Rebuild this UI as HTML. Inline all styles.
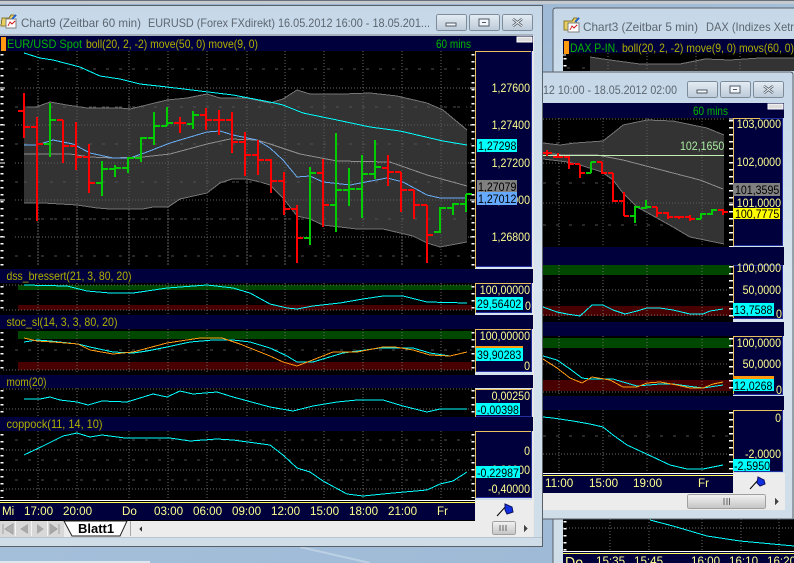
<!DOCTYPE html>
<html>
<head>
<meta charset="utf-8">
<title>Charts</title>
<style>
html,body{margin:0;padding:0;background:#a0bcd8}
svg{display:block}
text{font-family:"Liberation Sans",Arial,sans-serif;font-size:12px;white-space:pre}
.y,.k{transform-box:fill-box;transform-origin:0 0;transform:scaleX(.885)}
.y{fill:#ffff90}
.e{text-anchor:end;transform-origin:100% 0}
.k{fill:#000}
.h{fill:#b0b000}
.g{fill:#00b800}
.t{fill:#5c6670}
.x{fill:#ffff90;transform-box:fill-box;transform-origin:0 0;transform:scaleX(.97)}
.d{stroke:#6c6c6c;stroke-width:1;stroke-dasharray:1 2;fill:none}
.dd{stroke:#505050;stroke-width:1;stroke-dasharray:3 10;fill:none}
.l{fill:none;stroke-width:1;shape-rendering:crispEdges}
.c{stroke:#00ffff}
.o{stroke:#ff9a10}
.b{stroke:#68adf5}
.gr{stroke:#8e8e8e}
.bf{fill:#333;stroke:none}
.be{fill:none;stroke:#747474;stroke-width:1;shape-rendering:crispEdges}
.r{fill:none;stroke:#ff0000;stroke-width:2;shape-rendering:crispEdges}
.u{fill:none;stroke:#00cc00;stroke-width:2;shape-rendering:crispEdges}
.tk{stroke:#fff;stroke-width:3;stroke-dasharray:1.5 5.5;fill:none}
.btn{fill:url(#bg);stroke:#7e8c9a;stroke-width:1}
.ax{fill:#00003c;stroke:#2030a0;stroke-width:1}
.ay{stroke:#e8c060;stroke-width:1;fill:none}
</style>
</head>
<body>
<svg xmlns="http://www.w3.org/2000/svg" width="794" height="563" viewBox="0 0 794 563" shape-rendering="crispEdges">
<defs>
<linearGradient id="bg" x1="0" y1="0" x2="0" y2="1"><stop offset="0" stop-color="#e4ecf4"/><stop offset="1" stop-color="#bccad8"/></linearGradient>
<linearGradient id="tb" x1="0" y1="0" x2="0" y2="1"><stop offset="0" stop-color="#c6d8e8"/><stop offset=".5" stop-color="#d8e5f0"/><stop offset="1" stop-color="#cfdde9"/></linearGradient>
<linearGradient id="sc" x1="0" y1="0" x2="0" y2="1"><stop offset="0" stop-color="#f2f2f2"/><stop offset="1" stop-color="#c4c4c4"/></linearGradient>
<linearGradient id="ds" x1="0" y1="0" x2="1" y2="1"><stop offset="0" stop-color="#8eacca"/><stop offset=".5" stop-color="#a4bfda"/><stop offset="1" stop-color="#9cb8d4"/></linearGradient>
</defs>

<!-- desktop -->
<rect width="794" height="563" fill="url(#ds)"/>
<rect x="0" y="0" width="794" height="4" fill="#c4cad0"/>
<rect x="0" y="0" width="794" height="1" fill="#6a7078"/>
<rect x="0" y="561" width="150" height="2" fill="#dfe6ee"/>
<path d="M300 547L370 563" stroke="#bcd0e4" stroke-width="2" fill="none" shape-rendering="auto"/>

<!-- CHART3 WINDOW (back) -->
<rect x="553" y="8" width="241" height="555" fill="url(#tb)"/>
<path d="M553 563V11Q553 8 556 8H794" fill="none" stroke="#5a6068"/>
<rect x="563" y="39" width="231" height="14" fill="#00003c"/>
<rect x="563" y="53" width="231" height="18" fill="#000"/>
<rect x="564" y="41" width="5" height="13" fill="#ff9a10"/>
<path d="M590 71V57L610 60L640 64L680 64L705 59L730 60L760 58L794 58V71Z" class="bf"/>
<polyline class="be" points="590,57 610,60 640,64 680,64 705,59 730,60 760,58 794,58"/>
<line x1="563" y1="55" x2="566" y2="55" stroke="#fff" stroke-width="1"/>
<line x1="565" y1="58" x2="565" y2="71" class="tk"/>
<path d="M567 68h3M582 68h3" class="dd"/>
<path d="M608 53V71M647 53V71M696 53V71M740 53V71" class="d"/>
<text x="570" y="52" class="g" textLength="48" lengthAdjust="spacingAndGlyphs">DAX P-IN.</text>
<text x="622" y="52" class="h" textLength="172" lengthAdjust="spacingAndGlyphs">boll(20, 2, -2) move(9, 0) movs(60, 0)</text>
<text x="583" y="31" class="t" textLength="115" lengthAdjust="spacingAndGlyphs">Chart3 (Zeitbar 5 min)</text>
<text x="706" y="31" class="t" textLength="88" lengthAdjust="spacingAndGlyphs">DAX (Indizes Xetr</text>
<g>
<path d="M564 21h8l2-3h3l-2 12h-11z" fill="#e8d060" stroke="#8a7a30"/>
<rect x="568" y="23" width="11" height="9" fill="#fff" stroke="#808080"/>
<path d="M570 30l2-4l2 2l3-3" stroke="#d02020" fill="none"/>
<path d="M575 22l4-4" stroke="#2060d0" stroke-width="2"/>
</g>

<!-- chart3 lower part -->
<rect x="563" y="519" width="231" height="44" fill="#000"/>
<path d="M563 528H794" class="d"/>
<path d="M610 519V551M649 519V551M702 519V551M741 519V551M779 519V551" class="d"/>
<line x1="565" y1="521" x2="565" y2="551" class="tk"/>
<polyline class="l c" points="650,520 673,526 707,536 740,541 794,546"/>
<rect x="563" y="551" width="231" height="12" fill="#00003c"/>
<rect x="563" y="551" width="231" height="1" fill="#fff"/>
<rect x="563" y="553" width="231" height="1" fill="#ffff60"/>
<text x="565" y="568" class="y" style="font-size:16px">Do</text>
<text x="596" y="565" class="x">15:35</text>
<text x="634" y="565" class="x">15:45</text>
<text x="691" y="565" class="x">16:00</text>
<text x="729" y="565" class="x">16:10</text>
<text x="767" y="565" class="x">16:20</text>

<!-- THIRD WINDOW (middle) -->
<path d="M530 72H790Q793 72 793 75V519H530Z" fill="url(#tb)" stroke="#5a6068"/>
<rect x="543" y="103" width="241" height="15" fill="#00003c"/>
<rect x="543" y="118" width="190" height="129" fill="#000"/>
<rect x="543" y="247" width="241" height="18" fill="#00003c"/>
<rect x="543" y="265" width="190" height="57" fill="#000"/>
<rect x="543" y="322" width="241" height="14" fill="#00003c"/>
<rect x="543" y="336" width="190" height="60" fill="#000"/>
<rect x="543" y="396" width="241" height="14" fill="#00003c"/>
<rect x="543" y="410" width="190" height="63" fill="#000"/>
<rect x="733" y="473" width="52" height="21" fill="#ececec"/>
<rect x="543" y="473" width="190" height="20" fill="#00003c"/>
<rect x="543" y="473" width="190" height="1" fill="#fff"/>
<rect x="543" y="475" width="190" height="1" fill="#ffff60"/>
<rect x="543" y="493" width="242" height="17" fill="#ececec"/>
<rect x="768" y="104" width="15" height="5" fill="#dcdcdc" stroke="#fff"/>

<text x="543" y="94" class="t" textLength="134" lengthAdjust="spacingAndGlyphs">12 10:00 - 18.05.2012 02:00</text>
<rect x="687.500" y="81.500" width="30" height="16" rx="2" class="btn"/>
<rect x="720.500" y="81.500" width="30" height="16" rx="2" class="btn"/>
<rect x="753.500" y="81.500" width="30" height="16" rx="2" class="btn"/>
<rect x="697" y="90" width="10" height="3" fill="#f4f8fc" stroke="#505a64"/>
<rect x="730" y="86" width="10" height="7" fill="#f4f8fc" stroke="#505a64"/>
<rect x="733" y="89" width="4" height="1" fill="#505a64"/>
<path d="M764 86l9 7M773 86l-9 7" stroke="#505a64" stroke-width="2.500" fill="none" shape-rendering="auto"/>
<path d="M764 86l9 7M773 86l-9 7" stroke="#f4f8fc" stroke-width="1" fill="none" shape-rendering="auto"/>
<text x="693" y="115" class="g" textLength="35" lengthAdjust="spacingAndGlyphs">60 mins</text>

<!-- window3 main panel -->
<path d="M543 119H724M543 163H724M543 203H724" class="d"/>
<path d="M559 118V247M603 118V247M647 118V247M702 118V247" class="d"/>
<path d="M543 143H724M543 183H724M543 225H724" class="dd"/>
<path d="M543 143L560 145L575 143L603 141L617 130L623 125L647 120L673 121L707 128L724 135V244L690 237L673 227L657 218L637 207L623 193L613 180L602 172L580 165L568 162L543 159Z" class="bf"/>
<polyline class="be" points="543,143 560,145 575,143 603,141 617,130 623,125 647,120 673,121 707,128 724,135"/>
<polyline class="be" points="724,244 690,237 673,227 657,218 637,207 623,193 613,180 602,172 580,165 568,162 543,159"/>
<path d="M647 118V247M702 118V247M543 203H724M603 118V247" class="d" style="stroke:#5c5c5c"/>
<polyline class="l gr" points="543,153 563,155 597,155 623,160 673,173 700,180 723,189"/>
<line x1="543" y1="155.500" x2="724" y2="155.500" stroke="#c4f0b4" stroke-width="1"/>
<text x="680" y="150" class="y" style="fill:#a8eca0">102,1650</text>
<path class="r" d="M547 150V156M543 153H552M558 153V158M553 157H563M569 156V169M564 157H569M569 164H574M580 165V178M575 164H580M580 173H585M602 162V174M597 162H602M602 173H607M613 173V202M608 173H613M613 201H618M624 192V216M619 201H624M624 216H629M657 207V217M652 207H657M657 213H662M668 212V219M663 213H668M668 217H673M679 216V219M674 217H684M690 215V221M685 217H690M690 219H695M723 209V215M718 210H723M723 212H728"/>
<path class="u" d="M591 162V173M586 173H591M591 162H596M635 206V223M630 216H635M635 207H640M646 200V209M641 208H646M646 207H651M701 213V219M696 219H701M701 214H706M712 209V215M707 214H712M712 210H717"/>
<line x1="731" y1="120" x2="731" y2="247" class="tk" style="stroke-width:4"/>
<line x1="729" y1="119" x2="733" y2="119" stroke="#fff"/><line x1="729" y1="163" x2="733" y2="163" stroke="#fff"/><line x1="729" y1="203" x2="733" y2="203" stroke="#fff"/>

<rect x="733.500" y="118.500" width="49" height="127" class="ax"/>
<path d="M733.500 246V118.500H760" class="ay"/>
<text x="781" y="128" class="y e">103,0000</text>
<text x="781" y="166" class="y e">102,0000</text>
<text x="781" y="207" class="y e">101,0000</text>
<rect x="733" y="183" width="47" height="13" fill="#808080"/>
<text x="735" y="194" class="k">101,3595</text>
<rect x="733" y="208" width="47" height="11" fill="#ffff00"/>
<text x="735" y="218" class="k">100,7775</text>

<!-- window3 panel A -->
<rect x="543" y="265" width="188" height="10" fill="#004800"/>
<rect x="543" y="306" width="188" height="10" fill="#480000"/>
<path d="M543 290H728M543 315H728" class="d"/>
<path d="M559 265V322M603 265V322M647 265V322M702 265V322" class="d"/>
<polyline class="l c" points="543,307 557,312 567,314 580,316 592,305 603,305 613,310 625,314 637,311 647,308 660,308 673,310 690,314 703,314 710,311 723,309"/>
<line x1="731" y1="266" x2="731" y2="320" class="tk" style="stroke-width:4"/>
<rect x="733.500" y="265.500" width="49" height="53" class="ax"/>
<path d="M733.500 318V265.500" class="ay"/>
<text x="781" y="272" class="y e">100,0000</text>
<text x="781" y="294" class="y e">50,0000</text>
<rect x="733" y="303" width="41" height="13" fill="#00ffff"/>
<text x="734" y="314" class="k">13,7588</text>
<text x="776" y="318" class="y">0</text>

<!-- window3 panel B -->
<rect x="543" y="338" width="188" height="10" fill="#004800"/>
<rect x="543" y="380" width="188" height="11" fill="#480000"/>
<path d="M543 364H728M543 392H728" class="d"/>
<path d="M559 336V396M603 336V396M647 336V396M702 336V396" class="d"/>
<polyline class="l c" points="543,356 557,360 570,369 582,378 590,379 613,379 623,382 637,386 660,384 673,384 687,386 703,388 723,385"/>
<polyline class="l o" points="543,359 557,368 570,378 582,383 592,377 610,380 623,387 637,387 647,383 660,382 677,385 690,388 703,388 713,384 723,382"/>
<line x1="731" y1="338" x2="731" y2="394" class="tk" style="stroke-width:4"/>
<rect x="733.500" y="336.500" width="49" height="58" class="ax"/>
<path d="M733.500 394V336.500H782" class="ay"/>
<text x="781" y="347" class="y e">100,0000</text>
<text x="781" y="368" class="y e">50,0000</text>
<rect x="733" y="376" width="41" height="3" fill="#ff9a10"/>
<rect x="733" y="379" width="41" height="12" fill="#00ffff"/>
<text x="734" y="390" class="k">12,0268</text>
<text x="776" y="394" class="y">0</text>

<!-- window3 panel C -->
<path d="M543 454H728" class="d"/>
<path d="M543 436H728" class="dd"/>
<path d="M559 410V473M603 410V473M647 410V473M702 410V473" class="d"/>
<polyline class="l c" points="543,417 553,418 573,421 590,424 603,427 613,435 627,445 640,451 653,457 670,465 687,469 703,469 723,465"/>
<line x1="731" y1="412" x2="731" y2="473" class="tk" style="stroke-width:4"/>
<rect x="733.500" y="410.500" width="49" height="61" class="ax"/>
<path d="M733.500 472V410.500H782" class="ay"/>
<text x="781" y="422" class="y e">0</text>
<text x="781" y="458" class="y e">-2,0000</text>
<rect x="733" y="459" width="37" height="12" fill="#00ffff"/>
<text x="734" y="470" class="k">-2,5950</text>
<text x="545" y="487" class="x">11:00</text>
<text x="589" y="487" class="x">15:00</text>
<text x="633" y="487" class="x">19:00</text>
<text x="698" y="487" class="x">Fr</text>
<path d="M750 489L759 479" stroke="#000" fill="none" shape-rendering="auto"/>
<path d="M758 477l6 3l1 4l-5 2l-3-3z" fill="#1030e0" stroke="#101060" shape-rendering="auto"/>
<rect x="687.500" y="494.500" width="78" height="14" rx="2" fill="url(#sc)" stroke="#a0a0a0"/>
<path d="M724 498v7M727 498v7M729.500 498v7" stroke="#666"/>
<path d="M775 498v7l4-3.500z" fill="#444"/>

<!-- MAIN WINDOW -->
<rect x="0" y="5" width="542" height="541" fill="url(#tb)"/>
<rect x="0" y="5" width="542" height="1" fill="#5a6068"/>
<rect x="542" y="5" width="1" height="541" fill="#5a6068"/>
<rect x="0" y="546" width="543" height="1" fill="#5a6068"/>
<rect x="0" y="34" width="533" height="2" fill="#a8b2bc"/>
<rect x="532" y="36" width="2" height="502" fill="#e8e8e8"/>
<rect x="0" y="36" width="533" height="15" fill="#00003c"/>
<rect x="0" y="51" width="475" height="218" fill="#000"/>
<rect x="0" y="269" width="533" height="14" fill="#00003c"/>
<rect x="0" y="283" width="475" height="32" fill="#000"/>
<rect x="0" y="315" width="533" height="14" fill="#00003c"/>
<rect x="0" y="329" width="475" height="46" fill="#000"/>
<rect x="0" y="375" width="533" height="13" fill="#00003c"/>
<rect x="0" y="388" width="475" height="29" fill="#000"/>
<rect x="0" y="417" width="533" height="14" fill="#00003c"/>
<rect x="0" y="431" width="475" height="69" fill="#000"/>
<rect x="0" y="500" width="475" height="20" fill="#00003c"/>
<rect x="0" y="500" width="475" height="1" fill="#fff"/>
<rect x="0" y="501" width="475" height="1" fill="#000"/>
<rect x="0" y="502" width="475" height="1" fill="#ffff60"/>
<rect x="0" y="520" width="533" height="1" fill="#000"/>
<rect x="475" y="500" width="58" height="21" fill="#ececec"/>
<rect x="0" y="521" width="533" height="16" fill="#ececec"/>
<rect x="0" y="537" width="542" height="1" fill="#b8c4d0"/>

<text x="21" y="27" class="t" textLength="120" lengthAdjust="spacingAndGlyphs">Chart9 (Zeitbar 60 min)</text>
<text x="148" y="27" class="t" textLength="127" lengthAdjust="spacingAndGlyphs">EURUSD (Forex FXdirekt)</text>
<text x="278" y="27" class="t" textLength="152" lengthAdjust="spacingAndGlyphs">16.05.2012 16:00 - 18.05.201...</text>
<g>
<path d="M2 18h7l2-3h3l-2 11H1z" fill="#e8d060" stroke="#8a7a30"/>
<rect x="6" y="19" width="10" height="9" fill="#fff" stroke="#808080"/>
<path d="M8 26l2-4l2 2l3-3" stroke="#d02020" fill="none"/>
<path d="M12 19l4-4" stroke="#2060d0" stroke-width="2"/>
</g>
<rect x="436.500" y="14.500" width="30" height="16" rx="2" class="btn"/>
<rect x="469.500" y="14.500" width="30" height="16" rx="2" class="btn"/>
<rect x="502.500" y="14.500" width="30" height="16" rx="2" class="btn"/>
<rect x="446" y="23" width="10" height="3" fill="#f4f8fc" stroke="#505a64"/>
<rect x="479" y="19" width="10" height="7" fill="#f4f8fc" stroke="#505a64"/>
<rect x="482" y="22" width="4" height="1" fill="#505a64"/>
<path d="M513 19l9 7M522 19l-9 7" stroke="#505a64" stroke-width="2.500" fill="none" shape-rendering="auto"/>
<path d="M513 19l9 7M522 19l-9 7" stroke="#f4f8fc" stroke-width="1" fill="none" shape-rendering="auto"/>

<rect x="1" y="37" width="5" height="14" fill="#ff9a10"/>
<text x="7" y="48" class="g" textLength="75" lengthAdjust="spacingAndGlyphs">EUR/USD Spot</text>
<text x="86" y="48" class="h" textLength="172" lengthAdjust="spacingAndGlyphs">boll(20, 2, -2) move(50, 0) move(9, 0)</text>
<text x="436" y="48" class="g" textLength="35" lengthAdjust="spacingAndGlyphs">60 mins</text>
<rect x="517" y="37" width="15" height="5" fill="#dcdcdc" stroke="#fff"/>

<!-- main price panel -->
<path d="M15 88H472M15 125H472M15 163H472M15 200H472M15 237H472" class="d"/>
<path d="M15 69H472M15 107H472M15 144H472M15 182H472M15 219H472M15 256H472" class="dd"/>
<path d="M38 51V266M77 51V266M129 51V266M168 51V266M207 51V266M247 51V266M285 51V266M324 51V266M363 51V266M402 51V266M441 51V266" class="d"/>
<path d="M24 107L36 107L50 102L67 105L87 108L120 108L130 109L167 100L187 98L207 94L220 98L247 98L270 103L283 99L297 90L310 94L343 94L370 93L397 96L427 103L443 110L467 130V242L440 247L427 243L413 236L383 229L357 229L323 225L310 219L297 216L283 198L270 185L260 182L247 179L232 179L220 183L207 193L180 199L168 207L153 207L143 209L110 209L97 208L77 205L43 203L24 203Z" class="bf"/>
<polyline class="be" points="24,107 36,107 50,102 67,105 87,108 120,108 130,109 167,100 187,98 207,94 220,98 247,98 270,103 283,99 297,90 310,94 343,94 370,93 397,96 427,103 443,110 467,130"/>
<polyline class="be" points="467,242 440,247 427,243 413,236 383,229 357,229 323,225 310,219 297,216 283,198 270,185 260,182 247,179 232,179 220,183 207,193 180,199 168,207 153,207 143,209 110,209 97,208 77,205 43,203 24,203"/>
<path d="M38 98V266M77 98V266M129 98V266M168 98V266M207 93V266M247 98V266M285 98V266M324 93V266M363 93V266M402 98V266M441 108V266M24 125H467M24 163H467M24 200H467" class="d" style="stroke:#5c5c5c"/>
<path d="M24 144H467M24 182H467M24 107H467M24 219H467" class="dd" style="stroke:#505050"/>
<polyline class="l c" points="24,53 40,58 53,60 80,67 100,76 120,79 140,84 167,87 200,91 233,95 270,102 283,105 303,113 337,120 370,127 400,131 443,141 467,145"/>
<polyline class="l gr" points="24,154 43,154 70,154 90,157 113,158 143,157 170,154 207,144 230,139 257,140 270,144 300,154 337,161 390,162 427,175 467,186"/>
<polyline class="l b" points="24,145 37,145 53,140 73,144 90,153 113,158 130,158 147,152 170,143 207,132 220,131 233,135 257,140 270,148 283,160 297,177 310,176 323,182 350,185 387,178 403,182 427,195 440,198 467,198"/>
<path class="r" d="M24 93V138M18 111H24M24 127H30M37 117V221M31 127H37M37 144H43M63 120V163M57 120H63M63 146H69M76 122V170M70 146H76M76 157H82M89 144V193M83 157H89M89 183H95M180 117V133M174 123H186M206 108V130M200 115H206M206 120H212M219 110V135M213 120H225M232 112V153M226 120H232M232 142H238M245 132V176M239 142H245M245 155H251M258 140V175M252 155H258M258 160H264M271 159V193M265 160H271M271 181H277M284 172V215M278 181H284M284 209H290M297 205V263M291 209H297M297 238H303M323 159V227M317 173H323M323 205H329M388 155V186M382 168H388M388 172H394M401 172V212M395 172H401M401 190H407M414 190V219M408 190H414M414 205H420M427 205V263M421 205H427M427 235H433"/>
<path class="u" d="M50 103V157M44 144H50M50 120H56M102 161V196M96 183H102M102 169H108M115 165V177M109 169H115M115 168H121M128 157V173M122 168H128M128 158H134M141 137V162M135 158H141M141 138H147M154 112V145M148 138H154M154 126H160M167 107V126M161 126H167M167 123H173M193 111V129M187 124H193M193 115H199M310 167V245M304 238H310M310 173H316M336 133V232M330 205H336M336 190H342M349 168V206M343 190H349M349 189H355M362 155V218M356 189H362M362 174H368M375 140V179M369 174H375M375 167H381M440 207V233M434 232H440M440 208H446M453 203V215M447 208H453M453 204H459M466 194V212M460 204H466M466 194H472"/>
<line x1="2" y1="54" x2="2" y2="266" class="tk"/>
<line x1="473" y1="54" x2="473" y2="266" class="tk"/>
<path d="M0 88h5M0 125h5M0 163h5M0 200h5M0 237h5M470 88h5M470 125h5M470 163h5M470 200h5M470 237h5" stroke="#fff" fill="none"/>
<rect x="475.500" y="51.500" width="56" height="215" class="ax"/>
<path d="M475.500 268V51.500H531" class="ay"/>
<text x="530" y="92" class="y e">1,27600</text>
<text x="530" y="129" class="y e">1,27400</text>
<text x="530" y="167" class="y e">1,27200</text>
<text x="530" y="204" class="y e">1,27000</text>
<text x="530" y="241" class="y e">1,26800</text>
<rect x="477" y="139" width="40" height="13" fill="#00ffff"/>
<text x="478" y="150" class="k">1,27298</text>
<rect x="477" y="180" width="40" height="12" fill="#808080"/>
<text x="478" y="191" class="k">1,27079</text>
<rect x="477" y="192" width="40" height="13" fill="#66aaff"/>
<text x="478" y="203" class="k">1,27012</text>

<!-- dss -->
<text x="6.500" y="280" class="h" textLength="125" lengthAdjust="spacingAndGlyphs">dss_bressert(21, 3, 80, 20)</text>
<rect x="18" y="285" width="454" height="5" fill="#004800"/>
<rect x="18" y="305" width="454" height="5" fill="#480000"/>
<path d="M3 285H472M3 310H472" class="d"/>
<path d="M38 283V315M77 283V315M129 283V315M168 283V315M207 283V315M247 283V315M285 283V315M324 283V315M363 283V315M402 283V315M441 283V315" class="d"/>
<polyline class="l c" points="24,285 67,286 87,291 110,293 133,293 147,291 167,288 207,285 233,288 250,293 270,304 287,308 297,309 313,306 340,303 363,299 383,296 403,296 427,302 467,303"/>
<line x1="2" y1="286" x2="2" y2="312" class="tk"/>
<line x1="473" y1="286" x2="473" y2="312" class="tk"/>
<rect x="475.500" y="283.500" width="56" height="29" class="ax"/>
<path d="M475.500 313V283.500H531" class="ay"/>
<text x="530" y="294" class="y e">100,00000</text>
<rect x="476" y="297" width="47" height="13" fill="#00ffff"/>
<text x="477" y="308" class="k">29,56402</text>
<text x="525" y="310" class="y">0</text>

<!-- stoc -->
<text x="6.500" y="326" class="h" textLength="111" lengthAdjust="spacingAndGlyphs">stoc_sl(14, 3, 3, 80, 20)</text>
<rect x="18" y="331" width="454" height="8" fill="#004800"/>
<rect x="18" y="362" width="454" height="8" fill="#480000"/>
<path d="M3 370H472" class="d"/>
<path d="M15 350H472" class="dd"/>
<path d="M38 329V372M77 329V372M129 329V372M168 329V372M207 329V372M247 329V372M285 329V372M324 329V372M363 329V372M402 329V372M441 329V372" class="d"/>
<polyline class="l c" points="24,342 37,340 50,341 78,344 90,347 113,352 133,353 147,351 167,347 190,342 213,340 233,340 250,342 270,348 287,356 297,362 313,362 343,353 380,348 413,348 430,353 450,356 467,352"/>
<polyline class="l o" points="24,338 37,341 53,342 78,344 90,350 113,354 133,352 167,343 200,338 222,338 240,344 270,356 283,362 297,366 310,361 333,352 357,352 383,347 395,347 413,350 430,355 450,356 467,352"/>
<line x1="2" y1="332" x2="2" y2="372" class="tk"/>
<line x1="473" y1="332" x2="473" y2="372" class="tk"/>
<rect x="475.500" y="329.500" width="56" height="42" class="ax"/>
<path d="M475.500 372V329.500H531" class="ay"/>
<text x="530" y="340" class="y e">100,00000</text>
<rect x="476" y="346" width="47" height="2" fill="#ff9a10"/>
<rect x="476" y="348" width="47" height="13" fill="#00ffff"/>
<text x="477" y="359" class="k">39,90283</text>
<text x="530" y="370" class="y e">0</text>

<!-- mom -->
<text x="6.500" y="386" class="h" textLength="40" lengthAdjust="spacingAndGlyphs">mom(20)</text>
<path d="M3 389H472M3 409H472" class="d"/>
<path d="M38 388V417M77 388V417M129 388V417M168 388V417M207 388V417M247 388V417M285 388V417M324 388V417M363 388V417M402 388V417M441 388V417" class="d"/>
<polyline class="l c" points="24,399 40,399 50,397 60,400 77,402 88,405 102,401 127,402 153,394 167,397 180,391 193,394 217,392 233,397 270,407 293,411 313,406 337,402 357,400 383,400 403,406 427,412 440,409 467,409"/>
<line x1="2" y1="390" x2="2" y2="416" class="tk"/>
<line x1="473" y1="390" x2="473" y2="416" class="tk"/>
<rect x="475.500" y="389.500" width="56" height="27" class="ax"/>
<path d="M475.500 417V389.500H531" class="ay"/>
<text x="530" y="400" class="y e">0,00250</text>
<rect x="476" y="403" width="44" height="12" fill="#00ffff"/>
<text x="477" y="414" class="k">-0,00398</text>

<!-- coppock -->
<text x="6.500" y="428" class="h" textLength="96" lengthAdjust="spacingAndGlyphs">coppock(11, 14, 10)</text>
<path d="M3 450H472M3 470H472M3 489H472" class="d"/>
<path d="M15 440H472M15 460H472M15 480H472" class="dd"/>
<path d="M38 431V500M77 431V500M129 431V500M168 431V500M207 431V500M247 431V500M285 431V500M324 431V500M363 431V500M402 431V500M441 431V500" class="d"/>
<polyline class="l c" points="24,455 43,446 63,436 77,433 90,437 102,435 125,438 170,438 190,441 217,439 233,440 270,445 283,455 297,468 310,472 323,481 347,494 363,496 393,493 427,490 440,484 453,481 467,472"/>
<line x1="2" y1="434" x2="2" y2="498" class="tk"/>
<line x1="473" y1="434" x2="473" y2="498" class="tk"/>
<rect x="475.500" y="431.500" width="56" height="66" class="ax"/>
<path d="M475.500 498V431.500H531" class="ay"/>
<text x="530" y="455" class="y e">0</text>
<text x="530" y="474" class="y e">-0,20000</text>
<rect x="476" y="466" width="44" height="12" fill="#00ffff"/>
<text x="477" y="477" class="k">-0,22987</text>
<text x="530" y="493" class="y e">-0,40000</text>

<!-- time axis -->
<text x="2" y="515" class="x">Mi</text>
<text x="24" y="515" class="x">17:00</text>
<text x="63" y="515" class="x">20:00</text>
<text x="122" y="515" class="x">Do</text>
<text x="154" y="515" class="x">03:00</text>
<text x="193" y="515" class="x">06:00</text>
<text x="232" y="515" class="x">09:00</text>
<text x="271" y="515" class="x">12:00</text>
<text x="310" y="515" class="x">15:00</text>
<text x="349" y="515" class="x">18:00</text>
<text x="388" y="515" class="x">21:00</text>
<text x="437" y="515" class="x">Fr</text>

<!-- flag -->
<path d="M497 516L507 505" stroke="#000" fill="none" shape-rendering="auto"/>
<path d="M505 504l7 3l1 5l-6 2l-2-4z" fill="#1030e0" stroke="#101060" shape-rendering="auto"/>

<!-- tabs -->
<rect x="0" y="521" width="64" height="16" fill="#d8d8d8"/>
<path d="M15.500 521v15M31.500 521v15M47.500 521v15" stroke="#f4f4f4"/>
<path d="M3 524v10M13 524l-8 5l8 5z" fill="#b0b0b0" stroke="#a0a0a0"/>
<path d="M28 524l-8 5l8 5z" fill="#a8a8a8"/>
<path d="M37 524l7 5l-7 5z" fill="#a8a8a8"/>
<path d="M50 524l7 5l-7 5zM59 524v10" fill="#a8a8a8" stroke="#a0a0a0"/>
<path d="M64 521L72 536H120L127 521Z" fill="#fff" stroke="#222" shape-rendering="auto"/>
<text x="78" y="533" style="font-size:13px;font-weight:bold;fill:#000">Blatt1</text>
<rect x="130" y="521" width="1" height="15" fill="#a8a8a8"/>
<path d="M142 526v6l-3-3z" fill="#333"/>
<rect x="492.500" y="521.500" width="23" height="13" rx="2" fill="url(#sc)" stroke="#a0a0a0"/>
<path d="M500 525v6M503 525v6M506 525v6" stroke="#666"/>
<path d="M524 525v7l4-3.500z" fill="#444"/>
</svg>
</body>
</html>
